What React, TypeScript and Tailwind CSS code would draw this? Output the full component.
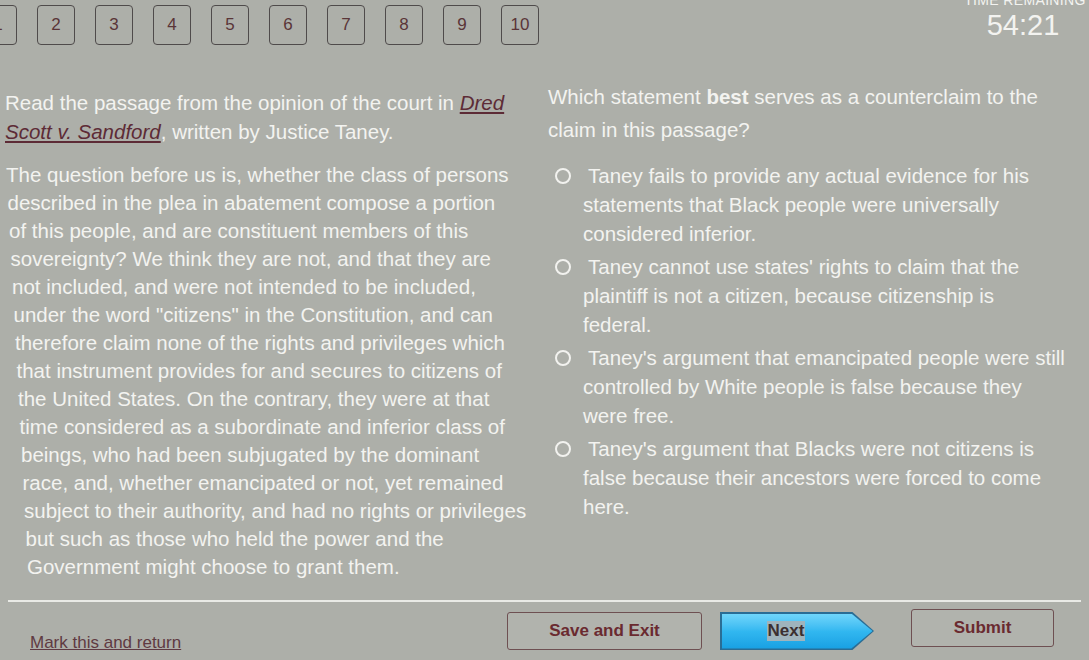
import React from 'react';

const passage = [
  'The question before us is, whether the class of persons',
  'described in the plea in abatement compose a portion',
  'of this people, and are constituent members of this',
  'sovereignty? We think they are not, and that they are',
  'not included, and were not intended to be included,',
  'under the word "citizens" in the Constitution, and can',
  'therefore claim none of the rights and privileges which',
  'that instrument provides for and secures to citizens of',
  'the United States. On the contrary, they were at that',
  'time considered as a subordinate and inferior class of',
  'beings, who had been subjugated by the dominant',
  'race, and, whether emancipated or not, yet remained',
  'subject to their authority, and had no rights or privileges',
  'but such as those who held the power and the',
  'Government might choose to grant them.',
];

const options = [
  [
    'Taney fails to provide any actual evidence for his',
    'statements that Black people were universally',
    'considered inferior.',
  ],
  [
    "Taney cannot use states' rights to claim that the",
    'plaintiff is not a citizen, because citizenship is',
    'federal.',
  ],
  [
    "Taney's argument that emancipated people were still",
    'controlled by White people is false because they',
    'were free.',
  ],
  [
    "Taney's argument that Blacks were not citizens is",
    'false because their ancestors were forced to come',
    'here.',
  ],
];

function NumBox({ n }: { n: number }) {
  return (
    <div className="w-[38px] h-[40px] shrink-0 flex items-center justify-center rounded-[4px] border-[1.5px] border-[#4f4b4b] text-[17px] text-[#5a3538]">
      {n}
    </div>
  );
}

function Option({ lines }: { lines: string[] }) {
  return (
    <div className="relative pl-[35px] leading-[29px]">
      <span className="absolute left-[7px] top-[7px] w-[16px] h-[16px] rounded-full border-2 border-[#f2f2ef]" />
      {lines.map((l, i) => (
        <div key={i} className={i === 0 ? 'whitespace-nowrap ml-[5px]' : 'whitespace-nowrap'}>
          {l}
        </div>
      ))}
    </div>
  );
}

export default function App() {
  return (
    <div className="w-[1089px] h-[660px] overflow-hidden bg-[#adafa9] text-[#f3f3f0] font-['Liberation_Sans',Arial,sans-serif] text-[20.5px] flex flex-col">
      {/* question strip + timer */}
      <div className="h-[50px] flex items-start shrink-0">
        <div className="flex gap-[20px] ml-[-21px] mt-[5px]">
          {[1, 2, 3, 4, 5, 6, 7, 8, 9, 10].map((n) => (
            <NumBox key={n} n={n} />
          ))}
        </div>
        <div className="ml-auto w-[128px] flex flex-col items-center">
          <div className="mt-[-8px] text-[14px] leading-[16px] tracking-wide whitespace-nowrap">TIME REMAINING</div>
          <div className="text-[29px] leading-[30px] mt-[2px] mr-[4px]">54:21</div>
        </div>
      </div>

      {/* content */}
      <div className="h-[550px] flex shrink-0">
        <div className="w-[543px] shrink-0">
          <div className="pt-[38px] pl-[5px] leading-[29px]">
            <div className="whitespace-nowrap">
              Read the passage from the opinion of the court in{' '}
              <span className="italic underline text-[#5d2b36]">Dred</span>
            </div>
            <div className="whitespace-nowrap">
              <span className="italic underline text-[#5d2b36]">Scott v. Sandford</span>, written by Justice Taney.
            </div>
          </div>
          <div className="mt-[15px] leading-[28px]">
            {passage.map((l, i) => (
              <div key={i} className="whitespace-nowrap" style={{ paddingLeft: 6 + i * 1.5 }}>
                {l}
              </div>
            ))}
          </div>
        </div>

        <div className="flex-1 pl-[5px]">
          <div className="pt-[30px] leading-[33px]">
            <div className="whitespace-nowrap">
              Which statement <span className="font-bold">best</span> serves as a counterclaim to the
            </div>
            <div className="whitespace-nowrap">claim in this passage?</div>
          </div>
          <div className="mt-[15px] flex flex-col gap-[4px]">
            {options.map((o, i) => (
              <Option key={i} lines={o} />
            ))}
          </div>
        </div>
      </div>

      {/* divider */}
      <div className="h-[2px] mx-[8px] bg-[#e9eae6] shrink-0" />

      {/* footer */}
      <div className="flex items-start pt-[10px]">
        <div className="w-[507px] shrink-0 pl-[30px] pt-[14px]">
          <span className="text-[17px] underline text-[#5f3a42]">Mark this and return</span>
        </div>
        <button className="w-[195px] h-[38px] shrink-0 rounded-[3px] border-[1.5px] border-[#6e5052] bg-[#b1b3ad] text-[17px] font-bold text-[#6a2a30]">
          Save and Exit
        </button>
        <div className="ml-[18px] w-[154px] h-[38px] shrink-0 bg-[#2a6d95] [clip-path:polygon(0_0,86%_0,100%_50%,86%_100%,0_100%)] p-[1.5px]">
          <div className="w-full h-full bg-gradient-to-b from-[#6fd6fb] via-[#31b7f0] to-[#17a0e3] [clip-path:polygon(0_0,86%_0,100%_50%,86%_100%,0_100%)] flex items-center justify-center pr-[22px]">
            <span className="text-[17px] font-bold text-[#3b3031] bg-[#9fb4bd] px-[1px] leading-[20px]">Next</span>
          </div>
        </div>
        <button className="ml-[37px] mt-[-3px] w-[143px] h-[38px] shrink-0 rounded-[3px] border-[1.5px] border-[#6e5052] bg-[#b1b3ad] text-[17px] font-bold text-[#6a2a30]">
          Submit
        </button>
      </div>
    </div>
  );
}
